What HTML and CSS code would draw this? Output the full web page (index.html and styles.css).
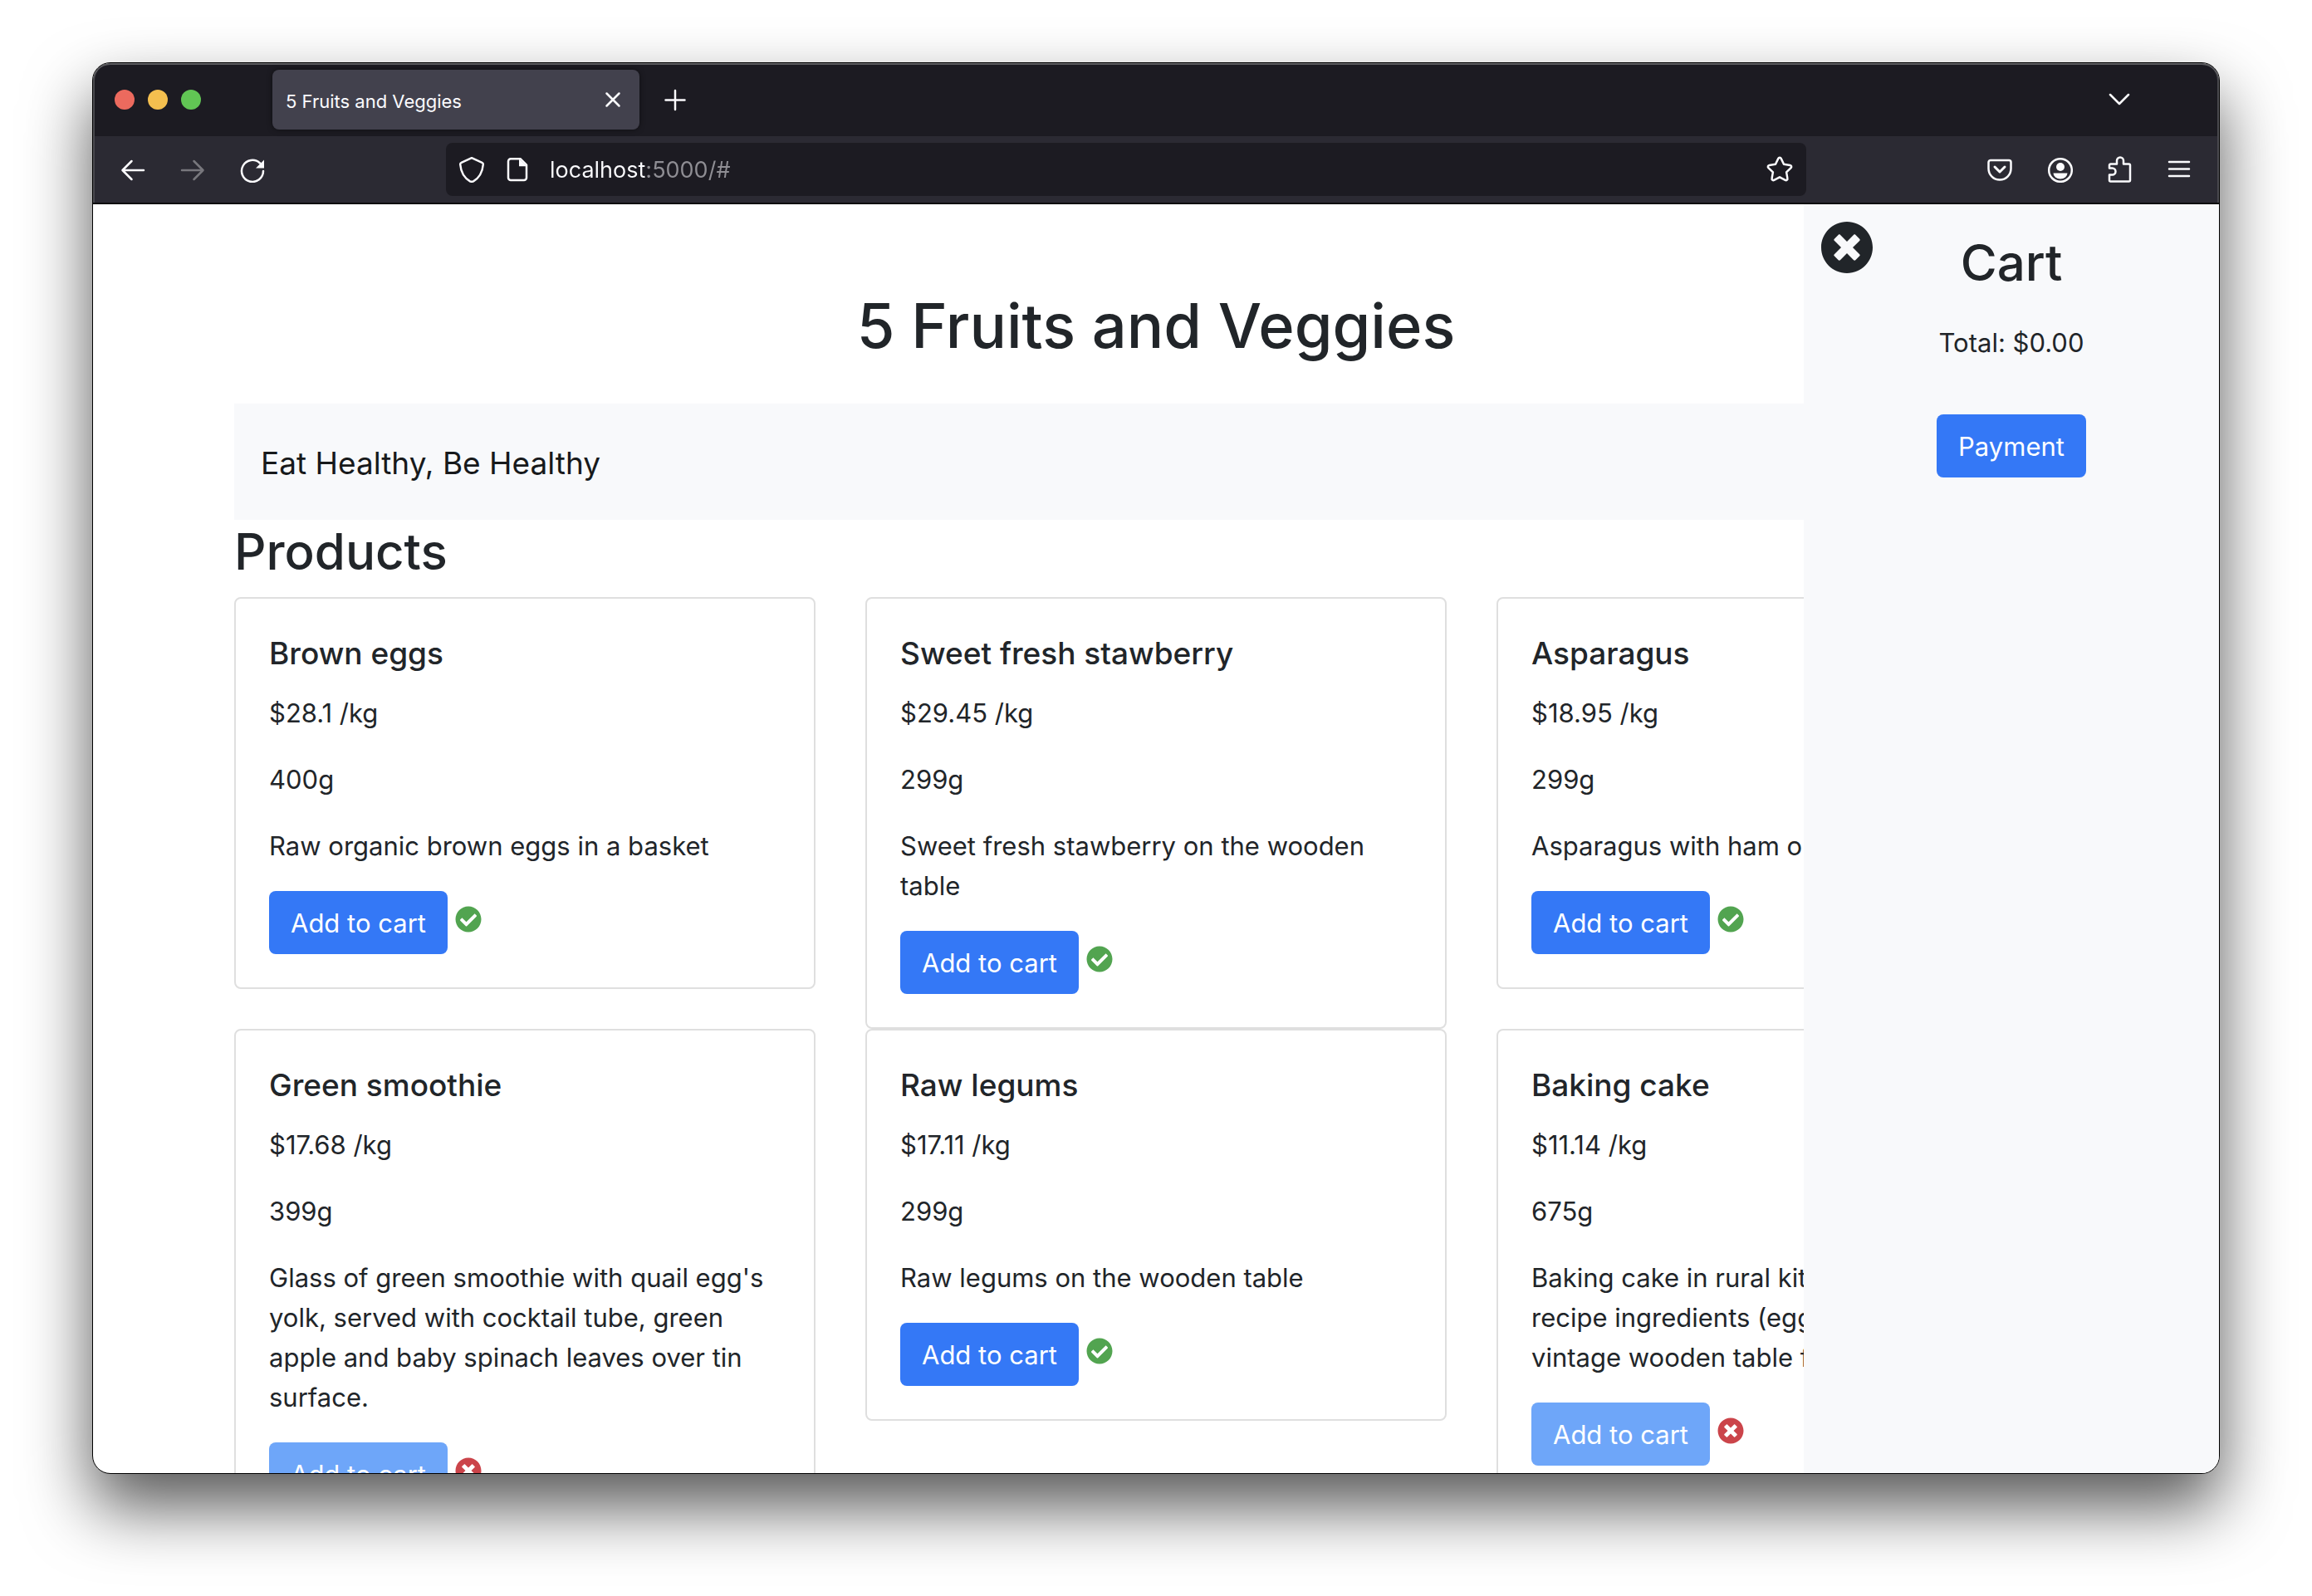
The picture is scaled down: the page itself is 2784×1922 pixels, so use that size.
FILE: index.html
```html
<!DOCTYPE html>
<html lang="en">
<head>
<meta charset="utf-8">
<meta name="viewport" content="width=device-width, initial-scale=1">
<title>5 Fruits and Veggies</title>
<link rel="stylesheet" href="styles.css">
</head>
<body>
<svg class="sprite" aria-hidden="true">
  <symbol id="check" viewBox="0 0 512 512"><path d="M504 256c0 136.967-111.033 248-248 248S8 392.967 8 256 119.033 8 256 8s248 111.033 248 248zM227.314 387.314l184-184c6.248-6.248 6.248-16.379 0-22.627l-22.627-22.627c-6.248-6.249-16.379-6.249-22.628 0L216 308.118l-70.059-70.059c-6.248-6.248-16.379-6.248-22.628 0l-22.627 22.627c-6.248 6.248-6.248 16.379 0 22.627l104 104c6.249 6.249 16.379 6.249 22.628.001z"/></symbol>
  <symbol id="times" viewBox="0 0 512 512"><path d="M256 8C119 8 8 119 8 256s111 248 248 248 248-111 248-248S393 8 256 8zm121.6 313.1c4.7 4.7 4.7 12.3 0 17L338 377.6c-4.7 4.7-12.3 4.7-17 0L256 312l-65.1 65.6c-4.7 4.7-12.3 4.7-17 0L134.4 338c-4.7-4.7-4.7-12.3 0-17l65.6-65-65.6-65.1c-4.7-4.7-4.7-12.3 0-17l39.6-39.6c4.7-4.7 12.3-4.7 17 0l65 65.7 65.1-65.6c4.7-4.7 12.3-4.7 17 0l39.6 39.6c4.7 4.7 4.7 12.3 0 17L312 256l65.6 65.1z"/></symbol>
</svg>
<div class="window">
  <header class="chrome">
    <div class="tabbar">
      <div class="lights"><button class="light red" aria-label="Close window"></button><button class="light yellow" aria-label="Minimize window"></button><button class="light green" aria-label="Zoom window"></button></div>
      <div class="tab">
        <span class="tab-title">5 Fruits and Veggies</span>
        <button class="icon-btn" aria-label="Close tab"><svg class="icon" viewBox="0 0 32 32"><path d="M8.500 8.500l15 15M23.500 8.500l-15 15"/></svg></button>
      </div>
      <button class="icon-btn new-tab" aria-label="New tab"><svg class="icon" viewBox="0 0 32 32"><path d="M16 5v23M4.500 16.500h23"/></svg></button>
      <button class="icon-btn all-tabs" aria-label="List all tabs"><svg class="icon" viewBox="0 0 32 32"><path d="M5 10l11 11 11-11"/></svg></button>
    </div>
    <div class="toolbar">
      <div class="nav">
        <button class="icon-btn" aria-label="Back"><svg class="icon" viewBox="0 0 32 32"><path d="M29 17H4M14.500 6l-11 11 11 11"/></svg></button>
        <button class="icon-btn dim" aria-label="Forward" disabled><svg class="icon" viewBox="0 0 32 32"><path d="M3 17h25M17.500 6l11 11-11 11"/></svg></button>
        <button class="icon-btn" aria-label="Reload"><svg class="icon" viewBox="0 0 32 32"><path d="M29 18a13 13 0 1 1-4-9.500"/><path class="solid" d="M30 4.500v10h-10z"/></svg></button>
      </div>
      <div class="urlbar">
        <svg class="icon" viewBox="0 0 32 32"><path d="M16 2.200l12.500 5.600c1 .4 1.400 1.200 1.300 2.200C29 19 25.500 26 18 30.300c-1.300.7-2.700.7-4 0C6.500 26 3 19 2.200 10c-.1-1 .3-1.800 1.300-2.200z"/></svg>
        <svg class="icon" viewBox="0 0 32 32"><path d="M8 3.200h11.500L27 10.700V26a3 3 0 0 1-3 3H8a3 3 0 0 1-3-3V6.200a3 3 0 0 1 3-3z"/><path class="solid" d="M18 3.200v9h9.500z"/></svg>
        <input class="url" type="text" aria-label="Address" value="localhost:5000/#">
        <button class="icon-btn" aria-label="Bookmark"><svg class="icon" viewBox="0 0 32 32"><path d="M14.300 2.900c.7-1.400 2.700-1.400 3.400 0l3.300 6.900 7.500 1.100c1.600.2 2.200 2.100 1.100 3.200l-5.500 5.300 1.300 7.500c.3 1.500-1.300 2.700-2.700 2L16 25.300l-6.700 3.600c-1.400.7-3-.5-2.700-2l1.300-7.500-5.500-5.300c-1.100-1.100-.5-3 1.100-3.200l7.500-1.100z"/></svg></button>
      </div>
      <div class="tools">
        <button class="icon-btn" aria-label="Save to Pocket"><svg class="icon" viewBox="0 0 32 32"><path d="M5 5h22a2.500 2.500 0 0 1 2.500 2.500v7.500a13.500 13.500 0 0 1-27 0V7.500A2.500 2.500 0 0 1 5 5z"/><path class="thick" d="M10 13l6 6 6-6"/></svg></button>
        <button class="icon-btn" aria-label="Account"><svg class="icon" viewBox="0 0 32 32"><circle cx="17" cy="17" r="13.800"/><circle class="solid" cx="17" cy="13" r="5"/><path class="solid" d="M8.500 20.500h17a8.500 7 0 0 1-17 0z"/></svg></button>
        <button class="icon-btn" aria-label="Extensions"><svg class="icon" viewBox="0 0 32 32"><path d="M5.500 30.500A1.500 1.500 0 0 1 4 29v-6.500h3.500a4 4 0 0 0 0-8H4V11a1.500 1.500 0 0 1 1.500-1.500H13V5.500a4 4 0 0 1 8 0v4h6.500A1.500 1.500 0 0 1 29 11v18a1.500 1.500 0 0 1-1.500 1.500z"/></svg></button>
        <button class="icon-btn" aria-label="Menu"><svg class="icon" viewBox="0 0 32 32"><path d="M4 7h24M4 15.500h24M4 24h24"/></svg></button>
      </div>
    </div>
  </header>
  <div class="page">
    <main class="container">
      <h1 class="title">5 Fruits and Veggies</h1>
      <nav class="banner"><a class="brand" href="#">Eat Healthy, Be Healthy</a></nav>
      <h2 class="heading">Products</h2>
      <section class="products">
        <article class="card">
          <h3 class="card-title">Brown eggs</h3>
          <p>$28.1 /kg</p><p>400g</p><p>Raw organic brown eggs in a basket</p>
          <div class="actions"><button class="btn">Add to cart</button><svg class="status ok"><use href="#check"/></svg></div>
        </article>
        <article class="card">
          <h3 class="card-title">Sweet fresh stawberry</h3>
          <p>$29.45 /kg</p><p>299g</p><p>Sweet fresh stawberry on the wooden table</p>
          <div class="actions"><button class="btn">Add to cart</button><svg class="status ok"><use href="#check"/></svg></div>
        </article>
        <article class="card">
          <h3 class="card-title">Asparagus</h3>
          <p>$18.95 /kg</p><p>299g</p><p>Asparagus with ham on the wooden table</p>
          <div class="actions"><button class="btn">Add to cart</button><svg class="status ok"><use href="#check"/></svg></div>
        </article>
        <article class="card">
          <h3 class="card-title">Green smoothie</h3>
          <p>$17.68 /kg</p><p>399g</p><p>Glass of green smoothie with quail egg's yolk, served with cocktail tube, green apple and baby spinach leaves over tin surface.</p>
          <div class="actions"><button class="btn" disabled>Add to cart</button><svg class="status out"><use href="#times"/></svg></div>
        </article>
        <article class="card">
          <h3 class="card-title">Raw legums</h3>
          <p>$17.11 /kg</p><p>299g</p><p>Raw legums on the wooden table</p>
          <div class="actions"><button class="btn">Add to cart</button><svg class="status ok"><use href="#check"/></svg></div>
        </article>
        <article class="card">
          <h3 class="card-title">Baking cake</h3>
          <p>$11.14 /kg</p><p>675g</p><p>Baking cake in rural kitchen - dough recipe ingredients (eggs, flour, sugar) vintage wooden table from above.</p>
          <div class="actions"><button class="btn" disabled>Add to cart</button><svg class="status out"><use href="#times"/></svg></div>
        </article>
      </section>
    </main>
    <aside class="cart">
      <button class="cart-close" aria-label="Close cart"><svg><use href="#times"/></svg></button>
      <h2 class="heading">Cart</h2>
      <p class="total">Total: $0.00</p>
      <button class="btn">Payment</button>
    </aside>
  </div>
</div>
</body>
</html>
```

FILE: styles.css
```css
* { box-sizing: border-box; }

body {
  margin: 0;
  height: 100vh;
  padding: 75px 111px 147px;
  display: flex;
  background: #fff;
  color: #212529;
  font-family: Inter, "Liberation Sans", sans-serif;
  font-size: 31px;
  line-height: 48px;
}

h1, h2, h3, p { margin: 0; }
button, input { font: inherit; border: 0; margin: 0; }
.sprite { position: absolute; width: 0; height: 0; }

.window {
  flex: 1;
  min-width: 0;
  display: flex;
  flex-direction: column;
  overflow: hidden;
  border: 1px solid #000;
  border-radius: 22px;
  background: #fff;
  box-shadow: 0 40px 80px rgba(0, 0, 0, .66);
}

/* browser chrome */
.chrome {
  flex: none;
  background: #2b2a33;
  color: #fbfbfe;
  border-bottom: 2px solid #0c0c0d;
  border-radius: 21px 21px 0 0;
  overflow: hidden;
}
.tabbar {
  height: 88px;
  padding: 0 104px 0 26px;
  display: flex;
  align-items: center;
  background: #1c1b22;
  box-shadow: inset 0 2px #5c5c60, inset 2px 0 #4a4a4f, inset -2px 0 #4a4a4f;
  border-radius: 21px 21px 0 0;
}
.lights { display: flex; gap: 16px; margin-right: 86px; }
.light { width: 24px; height: 24px; padding: 0; border-radius: 50%; }
.red { background: #ec6a5e; }
.yellow { background: #f4bf4f; }
.green { background: #61c554; }
.tab {
  width: 442px;
  height: 72px;
  padding: 0 16px;
  display: flex;
  align-items: center;
  justify-content: space-between;
  border-radius: 8px;
  background: #42414d;
  box-shadow: 0 0 6px rgba(0, 0, 0, .5);
  font-size: 22px;
  line-height: 32px;
}
.tab-title { padding-top: 4px; }
.icon-btn { display: flex; padding: 0; background: none; color: inherit; }
.icon {
  width: 32px;
  height: 32px;
  flex: none;
  fill: none;
  stroke: currentColor;
  stroke-width: 2.5;
  stroke-linecap: round;
  stroke-linejoin: round;
}
.solid { fill: currentColor; stroke: none; }
.thick { stroke-width: 3; }
.new-tab { margin-left: 27px; }
.all-tabs { margin-left: auto; }
.dim { color: #78777d; }

.toolbar {
  height: 80px;
  padding: 8px 32px;
  display: flex;
  align-items: center;
  justify-content: space-between;
  box-shadow: inset 2px 0 #4a4a4f, inset -2px 0 #4a4a4f;
}
.nav, .tools { display: flex; gap: 40px; }
.nav { margin-right: 217px; }
.tools { margin-left: 217px; }
.urlbar {
  flex: 1;
  min-width: 0;
  height: 64px;
  padding: 0 16px 0 15px;
  display: flex;
  align-items: center;
  gap: 23px;
  border-radius: 8px;
  background: #1c1b22;
}
.url {
  flex: 1;
  min-width: 0;
  padding: 2px 0 0;
  color: #fbfbfe;
  font-size: 27px;
  line-height: 40px;
  background: linear-gradient(90deg, #fbfbfe 115px, #8f8e94 115px);
  background-clip: text;
  -webkit-background-clip: text;
  -webkit-text-fill-color: transparent;
}

/* shop page */
.page {
  flex: 1;
  min-height: 0;
  position: relative;
  overflow: hidden;
}
.container {
  max-width: 2280px;
  margin: 0 auto;
  padding: 98px 30px 0;
}
.title {
  font-size: 74px;
  line-height: 96px;
  font-weight: 500;
  text-align: center;
}
.banner {
  margin-top: 46px;
  padding: 42px 32px 38px;
  background: #f8f9fb;
}
.brand {
  display: block;
  font-size: 37px;
  line-height: 60px;
  color: #17191b;
  text-decoration: none;
}
.heading {
  font-size: 60px;
  line-height: 77px;
  font-weight: 500;
}
.products {
  margin-top: 16px;
  display: grid;
  grid-template-columns: repeat(3, minmax(0, 1fr));
  column-gap: 60px;
  align-items: start;
}
.card {
  padding: 42px 40px 40px;
  border: 2px solid #dfdfdf;
  border-radius: 8px;
  background: #fff;
}
.card-title {
  margin-bottom: 24px;
  font-size: 37px;
  line-height: 48px;
  font-weight: 500;
}
.card p { margin-bottom: 32px; }
.card p:last-of-type { margin-bottom: 30px; }
.actions { display: flex; align-items: center; gap: 9px; }
.btn {
  height: 76px;
  padding: 2px 26px 0;
  border-radius: 8px;
  background: #3478f6;
  color: #fff;
  white-space: nowrap;
}
.btn:disabled { background: #6ea6f9; }
.status { width: 32px; height: 32px; margin-bottom: 8px; }
.ok { fill: #52a450; }
.out { fill: #cb444a; }

.cart {
  position: absolute;
  top: 0;
  right: 0;
  bottom: 0;
  width: 500px;
  padding: 32px 32px 0;
  display: flex;
  flex-direction: column;
  align-items: center;
  background: #f8f9fb;
}
.cart-close {
  position: absolute;
  top: 20px;
  left: 20px;
  padding: 0;
  display: flex;
  background: none;
}
.cart-close svg { width: 64px; height: 64px; fill: #212529; }
.total { margin: 34px 0 62px; }
```
